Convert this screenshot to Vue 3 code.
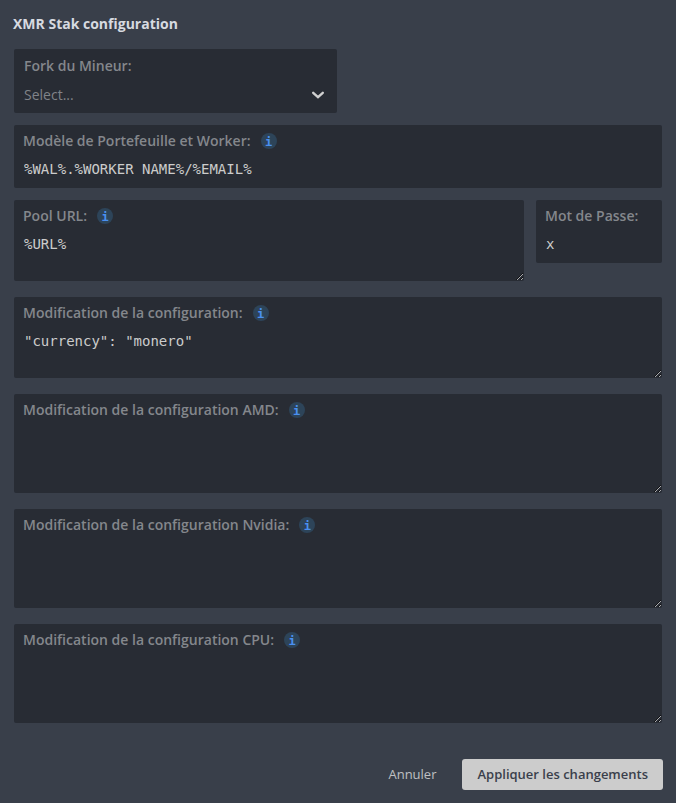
<template>
  <form class="config" @submit.prevent>
    <h1 class="title">XMR Stak configuration</h1>

    <!-- Fork selection -->
    <div class="field field-select">
      <div class="field-head">
        <label class="label" for="fork">Fork du Mineur:</label>
      </div>
      <select id="fork" v-model="form.fork" class="select">
        <option value="">Select...</option>
        <option value="xmr-stak">xmr-stak</option>
      </select>
      <svg class="chevron" viewBox="0 0 20 20" width="20" height="20" aria-hidden="true">
        <path d="M5.2 7.8 L10 12.2 L14.8 7.8" />
      </svg>
    </div>

    <div class="field">
      <div class="field-head">
        <label class="label" for="wallet">Modèle de Portefeuille et Worker:</label>
        <span class="info">i</span>
      </div>
      <input id="wallet" v-model="form.wallet" class="control" type="text" spellcheck="false" />
    </div>

    <!-- Pool and password share one row -->
    <div class="row">
      <div class="field pool">
        <div class="field-head">
          <label class="label" for="pool">Pool URL:</label>
          <span class="info">i</span>
        </div>
        <textarea id="pool" v-model="form.pool" class="control" rows="2" spellcheck="false"></textarea>
      </div>
      <div class="field password">
        <div class="field-head">
          <label class="label" for="password">Mot de Passe:</label>
        </div>
        <input id="password" v-model="form.password" class="control" type="text" spellcheck="false" />
      </div>
    </div>

    <div class="areas">
      <div v-for="area in areas" :key="area.id" class="field">
        <div class="field-head">
          <label class="label" :for="area.id">{{ area.label }}</label>
          <span class="info">i</span>
        </div>
        <textarea
          :id="area.id"
          v-model="area.value"
          class="control"
          :rows="area.rows"
          spellcheck="false"
        ></textarea>
      </div>
    </div>

    <div class="actions">
      <button class="btn" type="button">Annuler</button>
      <button class="btn btn-primary" type="submit">Appliquer les changements</button>
    </div>
  </form>
</template>

<script setup>
import { reactive } from 'vue'

const form = reactive({
  fork: '',
  wallet: '%WAL%.%WORKER_NAME%/%EMAIL%',
  pool: '%URL%',
  password: 'x'
})

const areas = reactive([
  { id: 'config', label: 'Modification de la configuration:', value: '"currency": "monero"', rows: 2 },
  { id: 'amd', label: 'Modification de la configuration AMD:', value: '', rows: 3 },
  { id: 'nvidia', label: 'Modification de la configuration Nvidia:', value: '', rows: 3 },
  { id: 'cpu', label: 'Modification de la configuration CPU:', value: '', rows: 3 }
])
</script>

<style>
body {
  margin: 0;
  background: #393f4a;
}
</style>

<style scoped>
.config {
  padding: 14px 14px 13px;
  font-family: "Open Sans", "Noto Sans", sans-serif;
  font-size: 14px;
  color: #d7dae0;
}

.title {
  margin: 0 -1px 15px;
  font-size: 14px;
  line-height: 20px;
  font-weight: 700;
}

.field {
  margin-bottom: 12px;
  background: #282c34;
  border-radius: 2px;
}

.field-head {
  display: flex;
  align-items: center;
  gap: 10px;
  height: 20px;
  padding: 6px 9px 8px;
}

.label {
  font-weight: 600;
  line-height: 20px;
  color: #84878c;
}

/* round info badge */
.info {
  width: 16px;
  height: 16px;
  border-radius: 50%;
  background: #2d4459;
  color: #4a90f0;
  font-family: "DejaVu Sans Mono", monospace;
  font-size: 12px;
  font-weight: 700;
  line-height: 18px;
  text-align: center;
}

.control {
  display: block;
  box-sizing: border-box;
  width: 100%;
  margin: 0;
  padding: 1px 10px 10px;
  border: 0;
  outline: 0;
  background: transparent;
  color: #cccccc;
  font-family: "DejaVu Sans Mono", monospace;
  font-size: 14px;
  line-height: 18px;
}

/* one line box, tall enough for descenders */
input.control {
  height: 29px;
  padding: 0 10px 9px;
  line-height: 20px;
  text-shadow: 0 2px 0 transparent;
}

textarea.control {
  resize: vertical;
}

.field-select {
  position: relative;
  width: 50%;
  max-width: calc(50% - 1px);
}

.field-select .field-head {
  padding: 7px 10px;
}

.select {
  display: block;
  appearance: none;
  width: 100%;
  height: 30px;
  padding: 0 32px 8px 10px;
  border: 0;
  outline: 0;
  background: transparent;
  color: #808389;
  font-family: inherit;
  font-size: 14px;
}

.chevron {
  position: absolute;
  right: 9px;
  bottom: 8px;
  pointer-events: none;
  fill: none;
  stroke: #d0d0d0;
  stroke-width: 2.4;
  stroke-linecap: round;
}

.row {
  display: flex;
  align-items: flex-start;
  gap: 12px;
  margin-bottom: 16px;
}

.row .field {
  margin-bottom: 0;
}

.pool {
  flex: 1;
}

.password {
  width: 126px;
}

.areas {
  display: flex;
  flex-direction: column;
  gap: 16px;
}

.areas .field {
  margin-bottom: 0;
}

.actions {
  display: flex;
  justify-content: flex-end;
  gap: 11px;
  margin: 36px -1px 0 0;
}

.btn {
  height: 31px;
  padding: 0 15px 2px;
  border: 0;
  border-radius: 3px;
  background: transparent;
  color: #bfc0c2;
  font-family: inherit;
  font-size: 13px;
  cursor: pointer;
}

.btn-primary {
  background: #cccccc;
  color: #3a3f4b;
  font-weight: 600;
}
</style>
